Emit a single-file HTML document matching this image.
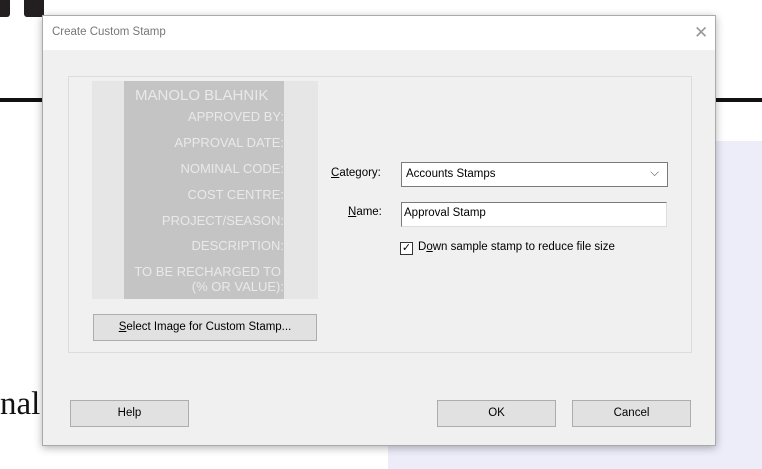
<!DOCTYPE html><html><head><style>
body{margin:0;width:762px;height:469px;position:relative;background:#fff;overflow:hidden;font-family:"Liberation Sans",sans-serif;}
.a{position:absolute}
.btn{position:absolute;background:#e1e1e1;border:1px solid #adadad;box-sizing:border-box;font-size:11.5px;color:#000;text-align:center;}
.st{position:absolute;right:0;color:#e9e9e9;font-size:13px;font-family:"Liberation Sans",sans-serif;white-space:nowrap;text-align:right}
u{text-decoration:underline}
</style></head><body>
<div class="a" style="left:0;top:0;width:10px;height:17px;background:#231f20;border-radius:0 0 3px 0"></div>
<div class="a" style="left:24px;top:0;width:20px;height:17px;background:#231f20;border-radius:0 0 3px 3px"></div>
<div class="a" style="left:0;top:98px;width:762px;height:4px;background:#111"></div>
<div class="a" style="left:388px;top:141px;width:374px;height:328px;background:#ededfa"></div>
<div class="a" style="left:0;top:386px;font-family:'Liberation Serif',serif;font-size:33px;color:#111">nal</div>
<div class="a" style="left:42px;top:15px;width:674px;height:431px;background:#f0f0f0;border:1px solid #aaa;box-sizing:border-box;box-shadow:0 2px 8px rgba(0,0,0,.3)">
 <div class="a" style="left:0;top:0;width:672px;height:34px;background:#fff"></div>
 <div class="a" style="left:9px;top:10px;font-size:11.5px;color:#777">Create Custom Stamp</div>
 <div class="a" style="left:651px;top:7px;font-size:17px;color:#999;font-weight:100">✕</div>
 <div class="a" style="left:25px;top:60px;width:624px;height:277px;border:1px solid #dcdcdc;box-sizing:border-box"></div>
 <div class="a" style="left:49px;top:65px;width:226px;height:218px;background:#e6e6e6">
  <div class="a" style="left:32px;top:0;width:160px;height:218px;background:#c4c4c4">
   <div class="st" style="right:auto;left:11px;top:6px;font-size:15px">MANOLO BLAHNIK</div>
   <div class="st" style="top:28px">APPROVED BY:</div>
   <div class="st" style="top:54px">APPROVAL DATE:</div>
   <div class="st" style="top:80px">NOMINAL CODE:</div>
   <div class="st" style="top:106px">COST CENTRE:</div>
   <div class="st" style="top:132px">PROJECT/SEASON:</div>
   <div class="st" style="top:157px">DESCRIPTION:</div>
   <div class="st" style="top:183px;right:3px">TO BE RECHARGED TO</div>
   <div class="st" style="top:198px">(% OR VALUE):</div>
  </div>
 </div>
 <div class="btn" style="left:50px;top:298px;width:224px;height:27px;line-height:25px"><u>S</u>elect Image for Custom Stamp...</div>
 <div class="a" style="left:288px;top:151px;font-size:11.5px"><u>C</u>ategory:</div>
 <div class="a" style="left:358px;top:146px;width:267px;height:25px;background:#fff;border:1px solid #7a7a7a;box-sizing:border-box;font-size:11.5px;line-height:23px;padding-left:4px">Accounts Stamps<span style="position:absolute;right:8px;top:-1px;color:#555">⌵</span></div>
 <div class="a" style="left:305px;top:190px;font-size:11.5px"><u>N</u>ame:</div>
 <div class="a" style="left:358px;top:186px;width:266px;height:25px;background:#fff;border:1px solid #7a7a7a;border-right-color:#ddd;border-bottom-color:#ddd;box-sizing:border-box;font-size:11.5px;line-height:21px;padding-left:2px">Approval Stamp</div>
 <div class="a" style="left:357px;top:226px;width:13px;height:13px;border:1px solid #333;box-sizing:border-box;background:#fff;font-size:11px;line-height:11px;text-align:center">✓</div>
 <div class="a" style="left:375px;top:225px;font-size:11.5px">D<u>o</u>wn sample stamp to reduce file size</div>
 <div class="btn" style="left:27px;top:384px;width:119px;height:27px;line-height:25px">Help</div>
 <div class="btn" style="left:394px;top:384px;width:119px;height:27px;line-height:25px">OK</div>
 <div class="btn" style="left:529px;top:384px;width:119px;height:27px;line-height:25px">Cancel</div>
</div>
</body></html>
